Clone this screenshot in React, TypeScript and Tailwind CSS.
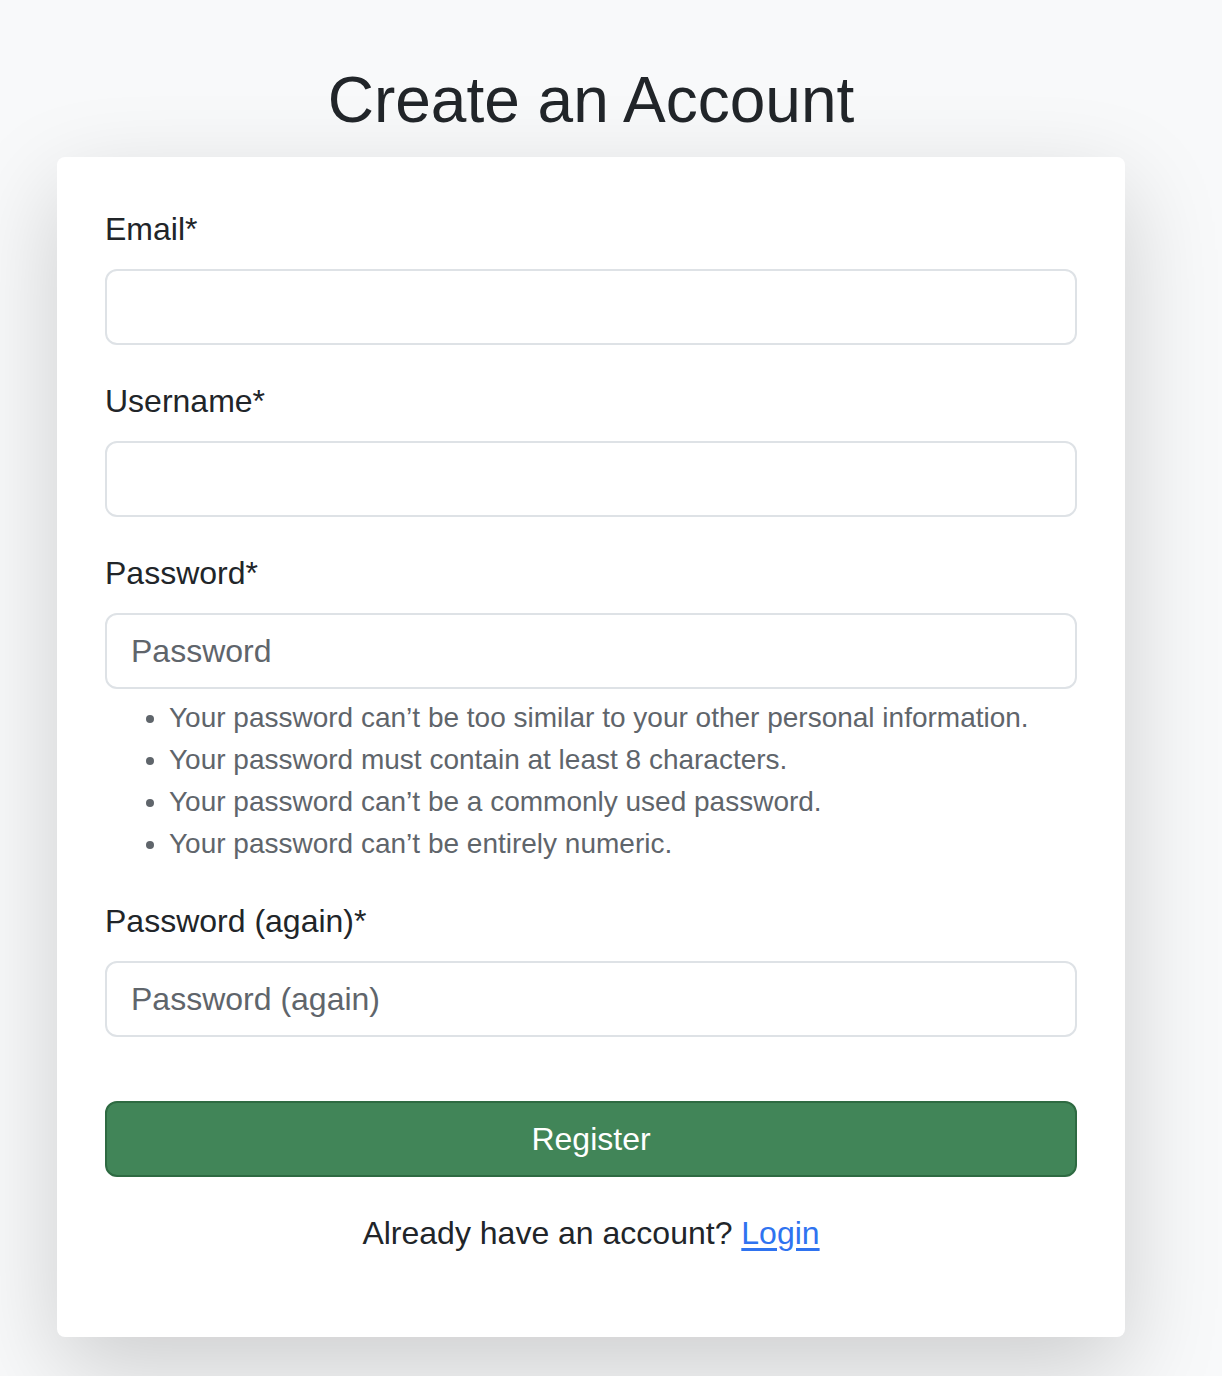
const font = { fontFamily: '"Liberation Sans", Arial, sans-serif' };

const rules = [
  'Your password can’t be too similar to your other personal information.',
  'Your password must contain at least 8 characters.',
  'Your password can’t be a commonly used password.',
  'Your password can’t be entirely numeric.',
];

function Field({ label, placeholder, type = 'text' }: { label: string; placeholder?: string; type?: string }) {
  return (
    <div>
      <label className="block text-[32px] leading-[48px] text-[#212529] mb-[16px]">{label}</label>
      <input
        type={type}
        placeholder={placeholder}
        className="block w-full h-[76px] px-[24px] text-[32px] text-[#212529] placeholder:text-[#5f656b] bg-white border-2 border-[#dee2e6] rounded-[12px] outline-none"
        style={font}
      />
    </div>
  );
}

export default function App() {
  return (
    <div className="min-h-[1376px] bg-[#f8f9fa] pt-[62px] overflow-hidden" style={font}>
      <div className="ml-[57px] w-[1068px]">
        <h1 className="text-center text-[64px] leading-[76px] text-[#212529] mb-[19px]">Create an Account</h1>
        <div className="bg-white rounded-[8px] p-[48px] shadow-[0_32px_96px_rgba(0,0,0,0.175)]">
          <form className="flex flex-col">
            <div className="mb-[32px]">
              <Field label="Email*" type="email" />
            </div>
            <div className="mb-[32px]">
              <Field label="Username*" />
            </div>
            <div className="mb-[32px]">
              <Field label="Password*" placeholder="Password" type="password" />
              <ul className="list-disc pl-[64px] mt-[8px] text-[28px] leading-[42px] text-[#5f656b]">
                {rules.map((r) => (
                  <li key={r}>{r}</li>
                ))}
              </ul>
            </div>
            <div className="mb-[64px]">
              <Field label="Password (again)*" placeholder="Password (again)" type="password" />
            </div>
            <button
              type="button"
              className="h-[76px] w-full rounded-[12px] bg-[#418558] border-2 border-[#2e6a42] text-white text-[32px]"
              style={font}
            >
              Register
            </button>
            <p className="text-center text-[32px] leading-[48px] text-[#212529] mt-[32px] mb-[32px]">
              Already have an account?{' '}
              <a href="#" className="text-[#2f73f0] underline underline-offset-[4px]">
                Login
              </a>
            </p>
          </form>
        </div>
      </div>
    </div>
  );
}
